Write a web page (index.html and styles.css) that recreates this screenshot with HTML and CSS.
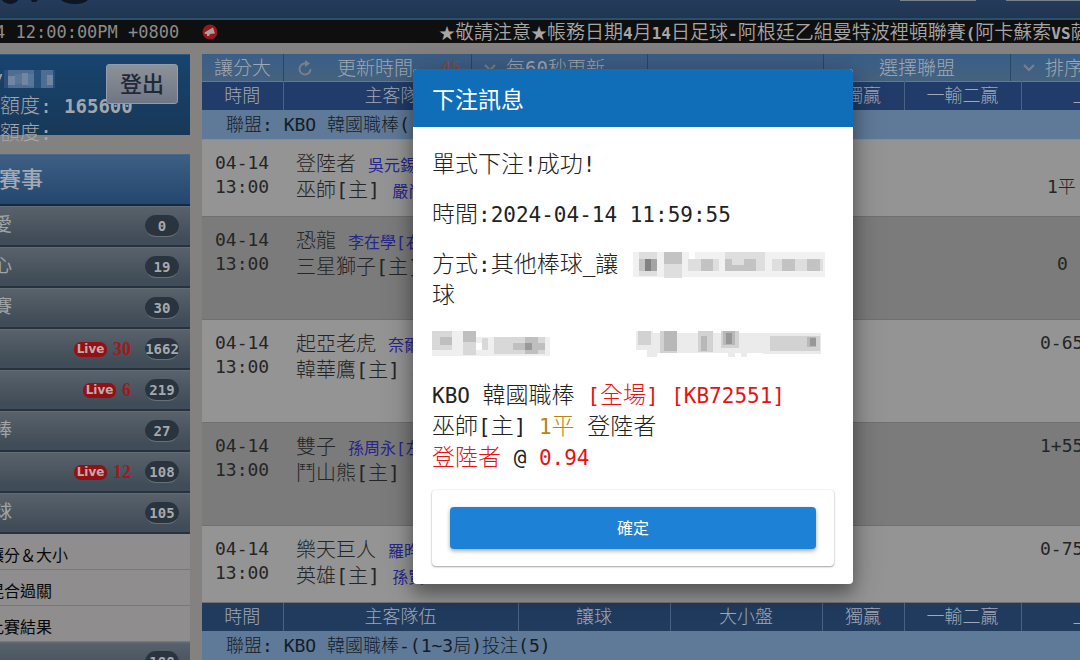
FILE: index.html
```html
<!DOCTYPE html>
<html lang="zh-Hant">
<head>
<meta charset="utf-8">
<title>下注訊息</title>
<link rel="stylesheet" href="styles.css">
</head>
<body>
<header class="banner">
  <svg class="logo" width="110" height="19" viewBox="0 0 110 19" aria-hidden="true"><path d="M2 0H18Q17 3 10 4Q4 3 2 0ZM31 0H38L36 2H32ZM61 0H88Q84 4 75 4Q66 4 61 0Z" fill="#0d1621"/></svg>
  <span class="tab"></span><span class="tab wide"></span>
</header>
<div class="ticker">
  <div class="clock">4 12:00:00PM +0800</div>
  <svg class="horn" width="18" height="18" viewBox="0 0 18 18" aria-hidden="true"><circle cx="9" cy="9" r="7.500" fill="#921a1e"/><path d="M3.500 9.500L12 4.500L14 10.500L9 11L8 13H6L6 11L4 11Z" fill="#aaa0a0"/></svg>
  <div class="news"><i>★</i>敬請注意<i>★</i>帳務日期<b>4</b>月<b>14</b>日足球<b>-</b>阿根廷乙組曼特波裡頓聯賽<b>(</b>阿卡蘇索<b>VS</b>薩</div>
</div>
<div class="layout">
  <aside class="side">
    <section class="account">
      <div class="user"><b>y</b>
        <svg width="51" height="18" viewBox="0 0 51 18" aria-hidden="true"><path d="M0 0H51V18H0Z" fill="#28507a"/><path d="M4 0H30V18H4ZM37 0H49V18H37Z" fill="#4d6e92"/><path d="M4 6H11V15H4ZM18 3H24V15H18ZM43 5H49V15H43Z" fill="#6f879f"/><path d="M11 4H18V14H11ZM24 4H30V16H24Z" fill="#587798"/></svg>
      </div>
      <div class="credit">額度: <b>165600</b></div>
      <div class="credit">額度:</div>
      <button class="logout" type="button">登出</button>
    </section>
    <nav class="menu">
      <h2>賽事</h2>
      <a class="item" href="#"><span>愛</span><i class="count">0</i></a>
      <a class="item" href="#"><span>心</span><i class="count">19</i></a>
      <a class="item" href="#"><span>賽</span><i class="count">30</i></a>
      <a class="item" href="#"><em class="live">Live</em><strong>30</strong><i class="count">1662</i></a>
      <a class="item" href="#"><em class="live">Live</em><strong>6</strong><i class="count">219</i></a>
      <a class="item" href="#"><span>棒</span><i class="count">27</i></a>
      <a class="item" href="#"><em class="live">Live</em><strong>12</strong><i class="count">108</i></a>
      <a class="item" href="#"><span>球</span><i class="count">105</i></a>
      <a class="sub" href="#">讓分＆大小</a>
      <a class="sub" href="#">混合過關</a>
      <a class="sub" href="#">比賽結果</a>
      <a class="item" href="#"><i class="count">188</i></a>
    </nav>
  </aside>
  <main class="board">
    <div class="tools">
      <a class="tool kind" href="#">讓分大</a>
      <a class="tool refresh" href="#"><svg width="16" height="18" viewBox="0 0 16 18" aria-hidden="true"><path d="M13.500 10A5.500 5.500 0 1 1 9 4.600" fill="none" stroke="#7d8085" stroke-width="1.800"/><path d="M8 1L13 4.500L8 8Z" fill="#7d8085"/></svg>更新時間<b>45</b></a>
      <a class="tool every" href="#"><svg width="12" height="8" viewBox="0 0 12 8" aria-hidden="true"><path d="M1 1L6 6L11 1" fill="none" stroke="#7d8085" stroke-width="2"/></svg>每60秒更新</a>
      <span class="tool blank"></span>
      <a class="tool league-pick" href="#">選擇聯盟</a>
      <a class="tool sort" href="#"><svg width="12" height="8" viewBox="0 0 12 8" aria-hidden="true"><path d="M1 1L6 6L11 1" fill="none" stroke="#7d8085" stroke-width="2"/></svg>排序</a>
    </div>
    <table>
      <colgroup><col class="c-time"><col class="c-team"><col class="c-odd"><col class="c-odd"><col class="c-solo"><col class="c-two"><col></colgroup>
      <tbody>
        <tr class="head"><th>時間</th><th>主客隊伍</th><th>讓球</th><th>大小盤</th><th>獨贏</th><th>一輸二贏</th><th class="last">上</th></tr>
        <tr class="league"><td colspan="7">聯盟: KBO 韓國職棒(</td></tr>
        <tr class="game short"><td class="time">04-14<br>13:00</td><td class="team">登陸者 <u>吳元錫</u><br>巫師[主] <u>嚴尚</u></td><td></td><td></td><td></td><td></td><td class="line low">1平</td></tr>
        <tr class="game alt"><td class="time">04-14<br>13:00</td><td class="team">恐龍 <u>李在學[右</u><br>三星獅子[主]</td><td></td><td></td><td></td><td></td><td class="line low zero">0</td></tr>
        <tr class="game"><td class="time">04-14<br>13:00</td><td class="team">起亞老虎 <u>奈爾</u><br>韓華鷹[主] <u>柳</u></td><td></td><td></td><td></td><td></td><td class="line">0-65</td></tr>
        <tr class="game alt"><td class="time">04-14<br>13:00</td><td class="team">雙子 <u>孫周永[左</u><br>鬥山熊[主] <u>金</u></td><td></td><td></td><td></td><td></td><td class="line">1+55</td></tr>
        <tr class="game short"><td class="time">04-14<br>13:00</td><td class="team">樂天巨人 <u>羅昀</u><br>英雄[主] <u>孫賢</u></td><td></td><td></td><td></td><td></td><td class="line">0-75</td></tr>
        <tr class="head second"><th>時間</th><th>主客隊伍</th><th>讓球</th><th>大小盤</th><th>獨贏</th><th>一輸二贏</th><th class="last">上</th></tr>
        <tr class="league"><td colspan="7">聯盟: KBO 韓國職棒-(1~3局)投注(5)</td></tr>
      </tbody>
    </table>
  </main>
</div>
<div class="dialog" role="dialog" aria-labelledby="dialog-title">
  <h1 id="dialog-title">下注訊息</h1>
  <div class="content">
    <p>單式下注<span>!</span>成功<span>!</span></p>
    <p>時間<span>:2024-04-14 11:59:55</span></p>
    <div class="pair">
      <p>方式<span>:</span>其他棒球<span>_</span>讓球</p>
      <svg class="mosaic" width="192" height="31" viewBox="0 0 192 31" aria-hidden="true">
        <path d="M0 5H192V30H0Z" fill="#f1f1f1"/><path d="M6 5H24V29H6ZM31 5H49V31H31ZM55 12H86V24H55ZM92 5H132V24H92ZM139 12H190V24H139Z" fill="#dedede"/>
        <path d="M6 12H12V24H6ZM31 5H49V17H31ZM68 12H80V24H68ZM92 12H99V24H92ZM99 18H111V24H99ZM111 12H123V24H111ZM149 12H162V24H149ZM174 12H187V24H174Z" fill="#c3c3c3"/><path d="M12 12H24V24H12Z" fill="#a4a4a4"/><path d="M12 12H18V24H12Z" fill="#828282"/><path d="M56 5H62V12H56Z" fill="#fff"/>
      </svg>
    </div>
    <div class="pair">
      <svg class="mosaic" width="120" height="31" viewBox="0 0 120 31" aria-hidden="true">
        <path d="M0 3H44V28H0ZM44 9H118V28H44Z" fill="#efefef"/><path d="M0 3H20V22H0ZM31 3H44V27H31ZM50 10H56V22H50ZM62 9H113V26H62Z" fill="#d8d8d8"/>
        <path d="M8 9H20V17H8ZM31 3H44V14H31ZM81 15H113V22H81ZM93 9H106V26H93Z" fill="#bfbfbf"/><path d="M93 15H100V22H93Z" fill="#999"/><path d="M44 15H50V22H44Z" fill="#fff"/>
      </svg>
      <svg class="mosaic" width="192" height="31" viewBox="0 0 192 31" aria-hidden="true">
        <path d="M3 3H20V22H3ZM14 20H24V29H14ZM20 5H130V25H20ZM95 25H102V29H95ZM108 25H114V29H108ZM130 5H188V26H130Z" fill="#ebebeb"/>
        <path d="M5 3H18V17H5ZM27 3H44V25H27ZM65 3H80V24H65ZM88 3H106V20H88ZM137 8H187V23H137Z" fill="#d2d2d2"/>
        <path d="M31 3H44V23H31ZM68 8H74V23H68ZM90 3H102V17H90ZM174 9H183V19H174Z" fill="#b8b8b8"/><path d="M93 5H99V16H93ZM177 10H183V18H177Z" fill="#979797"/>
      </svg>
    </div>
    <p><span>KBO </span>韓國職棒<span> <mark>[</mark></span><mark>全場</mark><span><mark>] [KB72551]</mark></span><br>巫師<span>[</span>主<span>] <b>1</b></span><b>平</b><span> </span>登陸者<br><mark>登陸者</mark><span> @ <mark>0.94</mark></span></p>
    <div class="actions"><button class="ok" type="button">確定</button></div>
  </div>
</div>
</body>
</html>
```
FILE: styles.css
```css
* { box-sizing: border-box; }
body {
  margin: 0;
  height: 100vh;
  overflow: hidden;
  background: #848181;
  color: #252525;
  font: 300 18px "DejaVu Sans Mono", "Noto Sans CJK TC", monospace;
}
a { color: inherit; text-decoration: none; }
svg { flex: none; display: block; }
table, th, td { border-collapse: collapse; padding: 0; font-weight: 300; }

.banner {
  display: flex;
  align-items: flex-start;
  gap: 30px;
  height: 20px;
  overflow: hidden;
  background: linear-gradient(#243b5c, #20364f);
  border-bottom: 2px solid #2b506c;
}
.logo { margin-right: auto; }
.tab { width: 76px; height: 1px; background: #77818c; }
.tab.wide { width: 74px; }

.ticker {
  display: flex;
  align-items: center;
  height: 23px;
  overflow: hidden;
  background: #0f0f0f;
  color: #8c8c8c;
  white-space: nowrap;
}
.clock { flex: none; width: 192px; margin-left: -5px; font-size: 17px; line-height: 22px; }
.horn { margin-left: 14px; }
.news { flex: none; margin-left: 220px; color: #a6a6a6; font-family: "Noto Sans CJK TC", sans-serif; font-size: 19px; font-weight: 350; line-height: 22px; }
.news i { font-size: 16px; font-style: normal; }
.news b { font: bold 16px/20px "DejaVu Sans Mono", monospace; }

.layout { display: flex; align-items: flex-start; }
.side { flex: none; width: 190px; padding-top: 11px; overflow: hidden; }
.account {
  position: relative;
  height: 81px;
  margin-bottom: 19px;
  padding-top: 12px;
  background: linear-gradient(#17446f, #183858);
  border-top: 1px solid #285a83;
  color: #a3a7ab;
  white-space: nowrap;
}
.user { display: flex; gap: 1px; height: 26px; margin-left: -8px; }
.user svg { margin-top: 3px; }
.credit { height: 27px; line-height: 27px; font-size: 20px; }
.credit b { font-size: 19px; font-weight: 700; }
.logout {
  position: absolute;
  top: 9px;
  right: 12px;
  width: 72px;
  height: 40px;
  padding: 0 0 4px;
  border: 1px solid #929da9;
  border-radius: 3px;
  background: linear-gradient(#8d9199, #6f7684);
  color: #1e2a3a;
  font: 500 22px/34px "Noto Sans CJK TC", sans-serif;
}
.menu h2 {
  height: 52px;
  margin: 0;
  background: linear-gradient(#3d5f84, #24476f);
  border-top: 1px solid #486789;
  border-bottom: 2px solid #142a40;
  color: #a3aab3;
  font: 500 22px/44px "Noto Sans CJK TC", sans-serif;
  text-indent: -1px;
}
.item {
  display: flex;
  align-items: center;
  height: 41px;
  padding-right: 11px;
  background: linear-gradient(#59626b, #404c57 85%);
  border-top: 1px solid #626c75;
  border-bottom: 2px solid #26333f;
  color: #a0a4a8;
}
.item span { margin-left: -6px; padding-bottom: 3px; font-size: 18px; font-weight: 400; line-height: 36px; }
.count {
  width: 34px;
  height: 22px;
  margin-left: auto;
  border-radius: 11px;
  background: #29343f;
  border-bottom: 1px solid #65707a;
  color: #a5a9ad;
  font: bold 14px/22px "DejaVu Sans Mono", monospace;
  text-align: center;
}
.live {
  width: 33px;
  margin-left: auto;
  border-radius: 7px;
  background: #941014;
  color: #c0abad;
  font: bold 12px/15px "DejaVu Sans", sans-serif;
  text-align: center;
}
.item strong { margin-left: 6px; color: #a2181d; font: bold 18px "Liberation Serif", serif; }
.item strong + .count { margin-left: 14px; }
.sub {
  display: block;
  height: 36px;
  padding-top: 4px;
  border-bottom: 1px solid #7a7777;
  background: #8f8d8d;
  color: #080808;
  font: 400 16px/32px "Noto Sans CJK TC", sans-serif;
  text-indent: -12px;
}

.board { flex: 1; min-width: 0; margin-left: 12px; padding-top: 11px; overflow: hidden; white-space: nowrap; }
.tools { display: flex; height: 27px; background: linear-gradient(#3a5e88, #45627f); color: #a0a8b1; font-size: 19px; line-height: 26px; }
.tool { flex: none; display: flex; align-items: center; border-right: 1px solid #294765; }
.kind { width: 82px; padding-left: 12px; }
.refresh { width: 188px; padding-left: 13px; }
.refresh svg { margin-right: 24px; }
.refresh b { margin-left: 28px; color: #95492f; font-size: 16px; }
.every { width: 176px; padding-left: 12px; }
.every svg { margin-right: 10px; }
.blank { width: 176px; }
.league-pick { width: 187px; justify-content: center; }
.sort { flex: 1; padding-left: 12px; }
.sort svg { margin-right: 10px; }

table { width: 100%; table-layout: fixed; }
.c-time { width: 81px; }
.c-team { width: 235px; }
.c-odd { width: 152px; }
.c-solo { width: 82px; }
.c-two { width: 117px; }
.head { height: 28px; background: #213c68; color: #a0a8b5; }
.second { background: #213b5f; }
.head th { height: 28px; padding-top: 1px; border-top: 1px solid #68798d; border-right: 1px solid #4b6283; line-height: 26px; font-size: 18px; }
.head .last { padding-left: 51px; border-right: 0; text-align: left; }
.league td { height: 30px; padding: 1px 0 0 24px; background: #5f7998; border-bottom: 1px solid #8a8d91; color: #141c26; font-size: 18px; line-height: 28px; }
.game td { height: 103px; padding-top: 11px; background: #949494; border-bottom: 1px solid #707070; vertical-align: top; overflow: hidden; }
.game.alt td { background: #7b7b7b; }
.game.short td { height: 77px; }
.game .time { padding-left: 13px; line-height: 24px; }
.game .team { padding-left: 13px; font-size: 20px; line-height: 26px; }
.team u { color: #26268c; font-size: 16px; font-weight: 400; line-height: 16px; text-decoration: none; }
.game .line { padding-left: 19px; line-height: 24px; }
.game .low { padding-top: 35px; padding-left: 26px; }
.game .zero { padding-left: 36px; }

.dialog {
  position: absolute;
  top: 69px;
  left: 413px;
  width: 440px;
  overflow: hidden;
  border-radius: 4px;
  background: #fff;
  color: #222;
  box-shadow: 0 10px 16px rgba(0, 0, 0, .3), 0 4px 32px rgba(0, 0, 0, .25);
}
.dialog h1 { margin: 0; padding: 0 19px; background: #106db7; color: #fff; font: 400 23px/58px "Noto Sans CJK TC", sans-serif; }
.content { display: flex; flex-direction: column; gap: 19px; padding: 20px 19px 18px; font: 300 23px/31px "Noto Sans CJK TC", sans-serif; }
.content p { margin: 0; }
.content span { font-family: "DejaVu Sans Mono", monospace; font-size: 21px; line-height: 20px; white-space: pre; }
.content b { color: #b8860b; font-weight: 300; }
.content mark { background: none; color: #e81212; }
.pair { display: grid; grid-template-columns: 201px 1fr; }
.actions { padding: 17px 18px; border-radius: 4px; box-shadow: 0 1px 2px rgba(0, 0, 0, .35), 0 0 2px rgba(0, 0, 0, .12); }
.ok {
  display: block;
  width: 100%;
  height: 42px;
  padding: 0 0 3px;
  border: 0;
  border-radius: 4px;
  background: #1d82d5;
  color: #fff;
  box-shadow: 0 2px 4px rgba(0, 0, 0, .35);
  font: 400 16px "Noto Sans CJK TC", sans-serif;
}
```
